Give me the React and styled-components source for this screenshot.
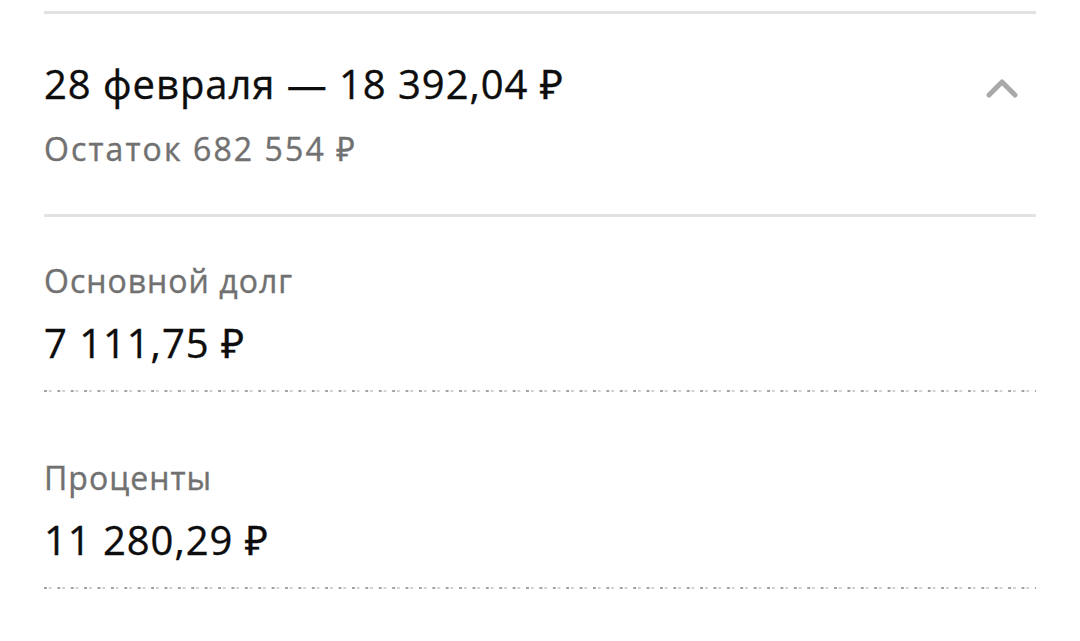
import React from "react";
import styled, { createGlobalStyle } from "styled-components";

const Global = createGlobalStyle`
  html, body { margin: 0; padding: 0; background: #ffffff; }
  body { font-family: "Open Sans", "Noto Sans", sans-serif; color: #0d0d0d; }
`;

const Page = styled.div`
  width: 992px;
  padding: 11px 44px 0;
  display: flex;
  flex-direction: column;
`;

const Rule = styled.div`
  height: 3px;
  background: #e2e2e2;
`;

const Header = styled.div`
  display: flex;
  justify-content: space-between;
  align-items: flex-start;
  padding: 46px 0 45px;
`;

const HeadText = styled.div`
  display: flex;
  flex-direction: column;
  gap: 21px;
`;

const Amount = styled.div`
  font-size: 40px;
  line-height: 48px;
  letter-spacing: 0.95px;
  color: #0d0d0d;
  -webkit-text-stroke: 0.35px #0d0d0d;
`;

const Caption = styled.div`
  font-size: 32px;
  line-height: 40px;
  letter-spacing: ${(p) => (p.$wide ? "2.1px" : "1px")};
  color: #717171;
  -webkit-text-stroke: 0.4px #717171;
`;

const Toggle = styled.button`
  border: 0;
  background: none;
  padding: 0;
  margin: 18px 18px 0 0;
  width: 32px;
  height: 20px;
  display: flex;
  cursor: pointer;
`;

const Items = styled.div`
  display: flex;
  flex-direction: column;
  gap: 66px;
  padding-top: 44px;
`;

const Item = styled.div`
  display: flex;
  flex-direction: column;
`;

const Value = styled(Amount)`
  margin-top: 18px;
`;

const Dotted = styled.div`
  margin-top: 23px;
  height: 2px;
  background-image: linear-gradient(
    to right,
    #a2a2a2 0 3px,
    transparent 3px 5px,
    #d2d2d2 5px 8px,
    transparent 8px
  );
  background-size: 13.4px 2px;
  background-repeat: repeat-x;
`;

const Chevron = () => (
  <svg width="32" height="20" viewBox="0 0 32 20" fill="none">
    <path
      d="M3 17 L16 4 L29 17"
      stroke="#a9a9a9"
      strokeWidth="5"
      strokeLinecap="round"
      strokeLinejoin="round"
    />
  </svg>
);

const breakdown = [
  { label: "Основной долг", value: "7 111,75 ₽" },
  { label: "Проценты", value: "11 280,29 ₽" },
];

export default function App() {
  return (
    <>
      <Global />
      <Page>
        <Rule />
        <Header>
          <HeadText>
            <Amount>28 февраля — 18 392,04 ₽</Amount>
            <Caption $wide>Остаток 682 554 ₽</Caption>
          </HeadText>
          <Toggle aria-label="Свернуть">
            <Chevron />
          </Toggle>
        </Header>
        <Rule />
        <Items>
          {breakdown.map((row) => (
            <Item key={row.label}>
              <Caption>{row.label}</Caption>
              <Value>{row.value}</Value>
              <Dotted />
            </Item>
          ))}
        </Items>
      </Page>
    </>
  );
}
